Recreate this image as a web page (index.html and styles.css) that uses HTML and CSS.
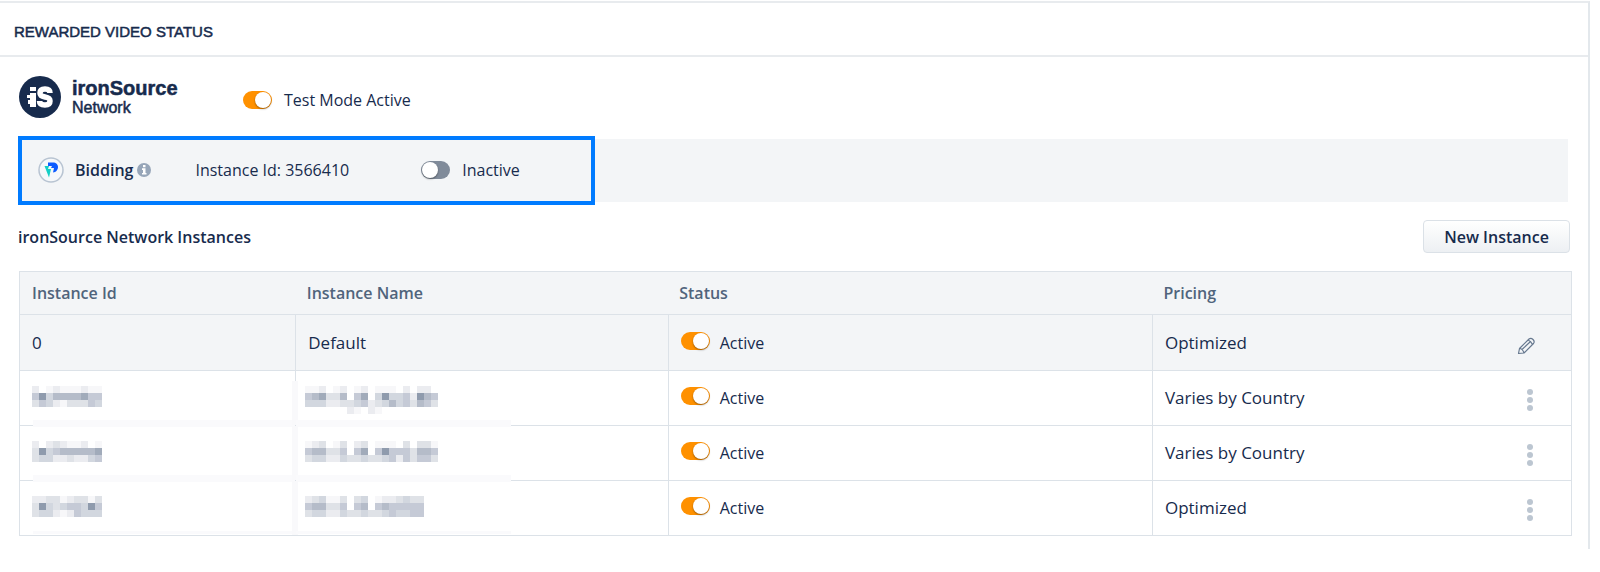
FILE: index.html
```
<!DOCTYPE html>
<html lang="en">
<head>
  <meta charset="UTF-8" />
  <meta name="viewport" content="width=device-width, initial-scale=1.0" />
  <title>Rewarded Video Status</title>
  <link rel="stylesheet" href="styles.css">
</head>
<body>
  <main class="panel">
    <h1 class="panel-title">REWARDED VIDEO STATUS</h1>

    <div class="panel-body">
      <div class="network">
        <div class="brand">
          <svg class="brand-logo" viewBox="0 0 42 42" aria-hidden="true">
            <circle cx="21" cy="21" r="21" fill="#172b4d"/>
            <path fill="#fff" d="M11 11h6v4h-6zM11 17h6v14h-6v-3h-2v-4h2v-2h-3v-3h3z"/>
            <path fill="none" stroke="#fff" stroke-width="5.5" d="M31 17c0-3-2-4-5-4s-5 1-5 4 2 3.500 5 4 5 1 5 4-2 4-5 4-5.500-1-5.500-4"/>
          </svg>
          <div class="brand-text">
            <strong>ironSource</strong>
            <span>Network</span>
          </div>
        </div>
        <label class="toggle"><input type="checkbox" checked>Test Mode Active</label>
      </div>

      <div class="strip">
        <section class="bidding">
          <svg class="bidding-logo" viewBox="0 0 26 26" aria-hidden="true">
            <circle cx="13" cy="13" r="12" fill="#f6f8fa" stroke="#b8c4d2" stroke-width="1.500"/>
            <path fill="#0d5cff" d="M10 5.500h5c3 0 5 2 5 4.500s-2 5.500-5 5.500l1-4.500h-3l1-2h-4z"/>
            <path fill="#13cfc6" d="M6.500 9h4.500l-1 3h3l-2 8.500z"/>
          </svg>
          <strong class="bidding-name">Bidding</strong>
          <svg class="info" viewBox="0 0 14 14" aria-hidden="true">
            <circle cx="7" cy="7" r="7" fill="#97a6b9"/>
            <path fill="#fff" d="M6 2h2.500v2.200H6zM5 5.300h3.500v4.700h1v1.600H5V10h1V6.900H5z"/>
          </svg>
          <span class="bidding-id">Instance Id: 3566410</span>
          <label class="toggle"><input type="checkbox">Inactive</label>
        </section>
      </div>

      <div class="list-head">
        <h2>ironSource Network Instances</h2>
        <button type="button" class="new-btn">New Instance</button>
      </div>

      <table class="instances">
        <thead>
          <tr>
            <th class="col-id">Instance Id</th>
            <th class="col-name">Instance Name</th>
            <th class="col-status">Status</th>
            <th>Pricing</th>
          </tr>
        </thead>
        <tbody>
          <tr class="default">
            <td>0</td>
            <td>Default</td>
            <td><label class="toggle"><input type="checkbox" checked>Active</label></td>
            <td>
              <div class="pricing">
                Optimized
                <button type="button" class="icon-btn edit" aria-label="Edit">
                  <svg width="18" height="18" viewBox="0 0 18 18" fill="none" stroke="#66788f" stroke-width="1.200" stroke-linejoin="round">
                    <path d="M1.500 16.500l1-5L12 2q2-1.500 4 .500t.500 4L7 16zM2.500 11.500q3 0 4.500 4.500M11 3q3 1 4.500 4.500M5 12.500L13.500 4.500"/>
                  </svg>
                </button>
              </div>
            </td>
          </tr>
          <tr class="hidden-row">
            <td><svg class="mosaic" data-rows="2012111211 5846666755 3542133354" aria-hidden="true"></svg></td>
            <td><svg class="mosaic" data-rows="1120120120111020220 5673360570484452865 4442233452346453653 0000002102100000000" aria-hidden="true"></svg></td>
            <td><label class="toggle"><input type="checkbox" checked>Active</label></td>
            <td><div class="pricing">Varies by Country <button type="button" class="icon-btn more" aria-label="More"><i></i><i></i><i></i></button></div></td>
          </tr>
          <tr class="hidden-row">
            <td><svg class="mosaic" data-rows="2023211201 3845666667 3442232245" aria-hidden="true"></svg></td>
            <td><svg class="mosaic" data-rows="1230130230111030331 5663350570585553665 3442243343345253553" aria-hidden="true"></svg></td>
            <td><label class="toggle"><input type="checkbox" checked>Active</label></td>
            <td><div class="pricing">Varies by Country <button type="button" class="icon-btn more" aria-label="More"><i></i><i></i><i></i></button></div></td>
          </tr>
          <tr class="hidden-row">
            <td><svg class="mosaic" data-rows="2233123313 3843455485 3442125444" aria-hidden="true"></svg></td>
            <td><svg class="mosaic" data-rows="23411303401223433 56633505605655555 34422433433454455" aria-hidden="true"></svg></td>
            <td><label class="toggle"><input type="checkbox" checked>Active</label></td>
            <td><div class="pricing">Optimized <button type="button" class="icon-btn more" aria-label="More"><i></i><i></i><i></i></button></div></td>
          </tr>
        </tbody>
      </table>
    </div>
  </main>

  <script src="mosaic.js"></script>
</body>
</html>
```
FILE: styles.css
```
* {
  box-sizing: border-box;
}
body {
  margin: 0;
  padding-top: 1px;
  background: #fff;
  color: #172b4d;
  font: 16px/24px "Open Sans", sans-serif;
}
.panel {
  margin-right: 10px;
  border-top: 2px solid #e8ebee;
  border-right: 2px solid #e3e8ec;
}
.panel-title {
  margin: 0;
  padding: 19px 14px 13px;
  border-bottom: 2px solid #e8ebee;
  font: 15px/20px "Liberation Sans", Arial, sans-serif;
  -webkit-text-stroke: 0.5px;
}
.panel-body {
  padding: 19px 16px 13px 18px;
}

/* network header */
.network {
  display: flex;
  align-items: center;
  height: 42px;
  padding-left: 1px;
}
.network .toggle {
  margin-top: 6px;
}
.brand {
  display: flex;
  align-items: center;
  gap: 11px;
  width: 224px;
}
.brand-logo {
  width: 42px;
  height: 42px;
}
.brand-text {
  padding-top: 1px;
  font: 16px/20px "Liberation Sans", Arial, sans-serif;
  -webkit-text-stroke: 0.5px;
}
.brand-text strong {
  display: block;
  font-size: 20px;
}

/* toggle switch */
.toggle {
  display: inline-flex;
  align-items: center;
  gap: 12px;
}
.toggle input {
  appearance: none;
  width: 29px;
  height: 18px;
  margin: 0;
  border-radius: 9px;
  background: #808b9a;
}
.toggle input::before {
  content: "";
  display: block;
  width: 16px;
  height: 16px;
  margin: 1px;
  border-radius: 50%;
  background: #fff;
  box-shadow: 0 1px 2px rgba(0, 0, 0, 0.4);
}
.toggle input:checked {
  background: #ff9100;
}
.toggle input:checked::before {
  margin-left: 12px;
}

/* bidding strip */
.strip {
  display: flex;
  align-items: center;
  height: 63px;
  margin: 21px 4px 0 0;
  background: #f3f5f7;
}
.bidding {
  display: flex;
  flex-shrink: 0;
  align-items: center;
  width: 577px;
  height: 69px;
  padding: 0 16px 2px;
  border: 4px solid #007bff;
}
.bidding-logo {
  width: 26px;
  height: 26px;
}
.bidding-name {
  margin: 0 4px 0 11px;
  font-weight: 600;
}
.info {
  width: 14px;
  height: 14px;
}
.bidding-id {
  margin: 0 72px 0 44px;
}

.list-head {
  display: flex;
  align-items: center;
  justify-content: space-between;
  padding: 18px 2px 18px 0;
}
.list-head h2 {
  margin: 0;
  font-size: 16px;
  line-height: 24px;
  font-weight: 600;
}
.new-btn {
  width: 147px;
  height: 33px;
  border: 1px solid #dbe1e7;
  border-radius: 4px;
  background: linear-gradient(#fff, #edf0f3);
  color: inherit;
  font: 600 16px/24px "Open Sans", sans-serif;
}

/* instances table */
.instances {
  width: calc(100% - 1px);
  margin-left: 1px;
  table-layout: fixed;
  border-collapse: collapse;
  border: 1px solid #dce2e8;
}
.instances th {
  height: 43px;
  padding: 0 11px;
  background: #f3f5f7;
  color: #50647c;
  font-weight: 600;
  text-align: left;
}
.instances th:first-child {
  padding-left: 12px;
}
.col-id {
  width: 17.8%;
}
.col-name {
  width: 24%;
}
.col-status {
  width: 31.2%;
}
.instances td {
  position: relative;
  height: 55px;
  padding: 0 12px;
  border: 1px solid #dce2e8;
  font-size: 17px;
}
.instances .default td {
  height: 56px;
  background: #f3f5f7;
}
.instances .toggle {
  display: flex;
  gap: 10px;
  font-size: 16px;
}
.instances .toggle input {
  margin-bottom: 4px;
}
.pricing {
  display: flex;
  align-items: center;
  justify-content: space-between;
}
.icon-btn {
  padding: 0;
  border: 0;
  background: none;
}
.edit {
  height: 18px;
  margin: 6px 24px 0 0;
}
.edit svg {
  display: block;
}
.more {
  display: flex;
  flex-direction: column;
  align-items: center;
  gap: 2px;
  width: 16px;
  margin: 4px 21px 0 0;
}
.more i {
  width: 6px;
  height: 6px;
  border-radius: 50%;
  background: #bcc6d1;
}

/* pixelated values, with the soft bands left over the grid lines */
.mosaic {
  display: block;
  height: 28px;
  margin-top: 4px;
}
.hidden-row td:nth-child(2) {
  padding-left: 9px;
}
.hidden-row td:nth-child(-n+2)::after {
  content: "";
  position: absolute;
  right: 0;
  bottom: -2px;
  left: 13px;
  height: 7px;
  background: #fafafc;
}
.hidden-row td:nth-child(2)::after {
  right: auto;
  left: 0;
  width: 215px;
}
.hidden-row:last-child td:nth-child(-n+2)::after {
  bottom: 1px;
  height: 3px;
}
.hidden-row td:nth-child(2)::before {
  content: "";
  position: absolute;
  top: 0;
  bottom: 0;
  left: -4px;
  width: 6px;
  background: #f9f9fb;
}
.default + .hidden-row td:nth-child(2)::before {
  top: 10px;
}
```
FILE: mosaic.js
```
// each digit is one 7px block, 0 = empty, 8 = darkest
const shades = ["", "#f7f7f9", "#ebecf0", "#dfe2e7", "#d2d7df", "#c5cad6", "#b5bcc9", "#a1abba", "#8f9bad"];
const size = 7;

document.querySelectorAll(".mosaic").forEach(function(svg) {
  const rows = svg.dataset.rows.split(" ");
  svg.setAttribute("width", rows[0].length * size);

  rows.forEach(function(row, y) {
    row.split("").forEach(function(level, x) {
      if (level === "0") return;
      const rect = document.createElementNS("http://www.w3.org/2000/svg", "rect");
      rect.setAttribute("x", x * size);
      rect.setAttribute("y", y * size);
      rect.setAttribute("width", size);
      rect.setAttribute("height", size);
      rect.setAttribute("fill", shades[level]);
      svg.appendChild(rect);
    });
  });
});
```
